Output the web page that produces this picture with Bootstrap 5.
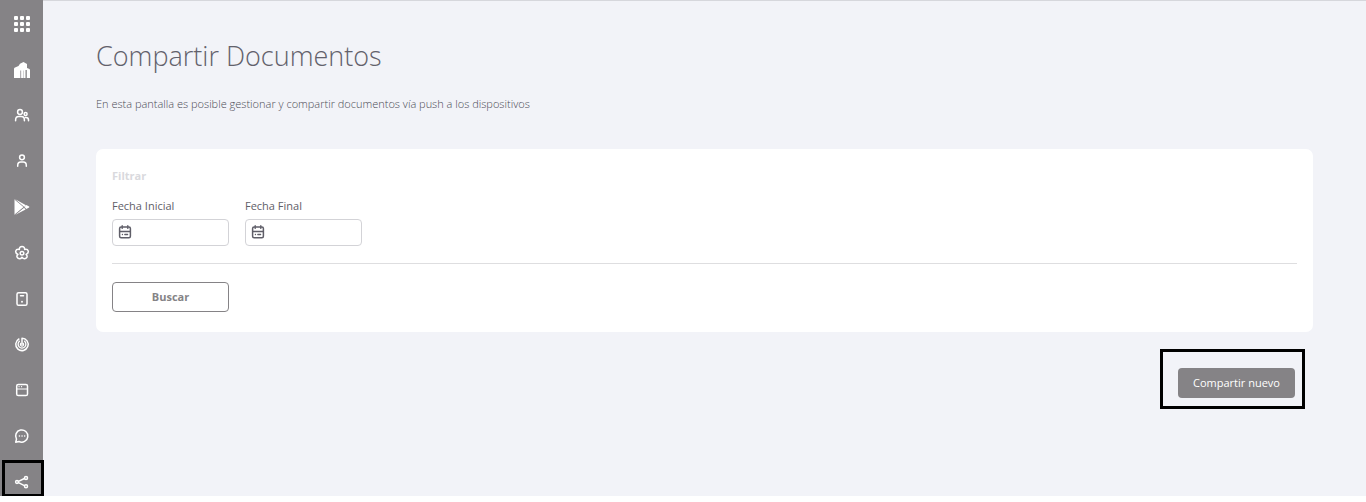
<!DOCTYPE html>
<html lang="es">
<head>
<meta charset="utf-8">
<meta name="viewport" content="width=device-width, initial-scale=1">
<title>Compartir Documentos</title>
<link href="https://cdn.jsdelivr.net/npm/bootstrap@5.3.0/dist/css/bootstrap.min.css" rel="stylesheet">
<style>
  body { font-family: "Open Sans", sans-serif; font-size: 11px; line-height: 16px; color: #5f5e68; background: #fff; }
  .app-shell { min-height: calc(100vh - 6px); background: #f2f3f8; }
  .side-bar { width: 43px; background: #858386; padding: 16px 0 6px; }
  .side-bar a { width: 16px; height: 16px; color: #fff; position: relative; }
  .side-bar svg, .date-box svg { display: block; width: 16px; height: 16px; fill: none; stroke: currentColor; stroke-width: 1.5; stroke-linecap: round; stroke-linejoin: round; }
  .side-bar .solid { fill: currentColor; stroke: none; }
  .marker::after { content: ""; position: absolute; border: 3px solid #000; pointer-events: none; }
  .side-bar .marker::after { inset: -14px -14px -7px -12px; }
  .new-doc.marker { position: relative; }
  .new-doc.marker::after { inset: -20px -11px -12px -19px; }
  .page-main { border-top: 1px solid #d6d7dc; padding: 34px 53px 0; }
  .page-title { font-size: 27px; line-height: 42px; font-weight: 300; color: #62616b; }
  .page-text { font-weight: 300; color: #4c4b55; margin: 19px 0 37px; }
  .filter-card { border: 0; border-radius: 7px; padding: 19px 16px 20px; }
  .filter-title { font-size: 11px; line-height: 16px; font-weight: 700; color: #d9d9dd; margin-bottom: 14px; }
  .field { width: 117px; }
  .field label { margin-bottom: 5px; }
  .date-box { height: 27px; border: 1px solid #d3d3d7; border-radius: 4px; padding: 0 4px 2px; color: #5f5e68; }
  .date-box input { font-size: 11px; background: transparent; outline: 0; }
  .filter-card hr { margin: 17px 0 18px; border-color: #dedee0; opacity: 1; }
  .app-btn { width: 117px; height: 30px; padding: 0; font-size: 11px; line-height: 16px; border-radius: 4px; }
  .btn-line { border: 1px solid #858386; color: #858386; font-weight: 700; }
  .btn-full, .btn-full:hover { background: #858386; color: #fff; }
  .actions { padding: 36px 18px 0; }
</style>
</head>
<body>
<div class="app-shell d-flex">
  <nav class="side-bar d-flex flex-column align-items-center justify-content-between flex-shrink-0" aria-label="Menú">
    <a href="#" aria-label="Aplicaciones"><svg class="solid" viewBox="0 0 16 16"><path d="M1 0h2q1 0 1 1v2q0 1-1 1H1q-1 0-1-1V1q0-1 1-1zM7 0h2q1 0 1 1v2q0 1-1 1H7q-1 0-1-1V1q0-1 1-1zM13 0h2q1 0 1 1v2q0 1-1 1h-2q-1 0-1-1V1q0-1 1-1zM1 6h2q1 0 1 1v2q0 1-1 1H1q-1 0-1-1V7q0-1 1-1zM7 6h2q1 0 1 1v2q0 1-1 1H7q-1 0-1-1V7q0-1 1-1zM13 6h2q1 0 1 1v2q0 1-1 1h-2q-1 0-1-1V7q0-1 1-1zM1 12h2q1 0 1 1v2q0 1-1 1H1q-1 0-1-1v-2q0-1 1-1zM7 12h2q1 0 1 1v2q0 1-1 1H7q-1 0-1-1v-2q0-1 1-1zM13 12h2q1 0 1 1v2q0 1-1 1h-2q-1 0-1-1v-2q0-1 1-1z"/></svg></a>
    <a href="#" aria-label="Inicio"><svg class="solid" viewBox="0 0 16 16"><path d="M0 16V7q0-1 1-1.400L4.500 4 6 1.800 9.500 0 13 2v4l2 .8q1 .4 1 1.400V16z"/><path d="M6 8.500h1.200V16H6z" fill="#b3b1b4"/><path d="M9 8.500h.8V16H9z" fill="#c9c8ca"/><path d="M11.500 8h1.300v8h-1.300z" fill="#858386"/></svg></a>
    <a href="#" aria-label="Usuarios"><svg viewBox="0 0 16 16"><circle cx="6" cy="4" r="2.400"/><path d="M1.600 12.800v-.6q0-3.600 3-3.600h2.800q3 0 3 3.600v.6"/><circle cx="11.600" cy="6" r="1.500"/><path d="M11.200 9.500h.8q2.500 0 2.500 2.500v.8"/></svg></a>
    <a href="#" aria-label="Usuario"><svg viewBox="0 0 16 16"><circle cx="8" cy="4.300" r="2.400"/><path d="M3.700 13.200v-.8q0-3.400 3-3.400h2.600q3 0 3 3.400v.8"/></svg></a>
    <a href="#" aria-label="Play Store"><svg class="solid" viewBox="0 0 16 16"><path d="M.8 0 12 6.200 10.200 8z"/><path d="M.5.300 9.600 8 .5 15.800z"/><path d="M1 16 10 8.800l1.600 1.600z"/><path d="M10.500 8 12.300 6l2.800 1.400q.6.600 0 1.200L12.300 10z"/><path d="m1.200.8 9 7.400-8.700 7" stroke="#858386" stroke-width=".5" fill="none"/></svg></a>
    <a href="#" aria-label="Configuración"><svg viewBox="0 0 16 16"><path d="M5.400 4.400Q5.300 1.500 8 1.500t2.600 2.900q3-.7 3.600 1.500t-2.100 3.500q2.100 2.200 0 3.700T8 12.200q-2 2.500-4.100.9t0-3.700Q1.200 8.100 1.800 5.900t3.600-1.500z"/><circle cx="8" cy="8.200" r="1.800"/></svg></a>
    <a href="#" aria-label="Dispositivos"><svg viewBox="0 0 16 16"><rect x="3" y="1.700" width="10" height="12.600" rx="1.600"/><path d="M6.500 4.800h3"/><path d="M8 10.600v.2" stroke-width="1.900"/></svg></a>
    <a href="#" aria-label="Localización"><svg viewBox="0 0 16 16"><path d="M8 7.500V1.200a6.200 6.200 0 1 1-3.100.8"/><path d="M10.600 4.300A3.900 3.900 0 1 1 5.400 4.300" stroke-width="1.300"/><path d="M9.100 6.300a1.600 1.600 0 1 1-2.200 0" stroke-width="1.200"/></svg></a>
    <a href="#" aria-label="Ventanas"><svg viewBox="0 0 16 16"><rect x="2.700" y="2.500" width="10.800" height="11" rx="1.600"/><path d="M2.700 7h10.800M5 4.700h.1M7.500 4.700h.1" stroke-width="1.200"/></svg></a>
    <a href="#" aria-label="Mensajes"><svg viewBox="0 0 16 16"><path d="M1.700 14.200l.8-3A6.100 6.100 0 1 1 5 13.500z"/><path d="M5.400 8h.1M8 8h.1M10.600 8h.1"/></svg></a>
    <a href="#" class="marker" aria-label="Compartir documentos" aria-current="page"><svg viewBox="0 0 16 16"><path d="m4.500 7.400 5.900-2.900M4.500 8.700l5.900 2.900"/><circle cx="3" cy="8" r="1.400"/><circle cx="12" cy="3.900" r="1.500"/><circle cx="12" cy="12.200" r="1.500"/></svg></a>
  </nav>
  <main class="page-main flex-grow-1">
    <h1 class="page-title mb-0">Compartir Documentos</h1>
    <p class="page-text">En esta pantalla es posible gestionar y compartir documentos vía push a los dispositivos</p>
    <form class="card filter-card">
      <h2 class="filter-title">Filtrar</h2>
      <div class="d-flex flex-wrap gap-3">
        <div class="field">
          <label class="d-block" for="fecha-inicial">Fecha Inicial</label>
          <div class="date-box d-flex align-items-center">
            <svg class="flex-shrink-0" viewBox="0 0 16 16"><rect x="2.600" y="3" width="10.800" height="10.700" rx="1.500"/><path d="M2.600 7.500h10.800M5.200 1.600v2.800M10.800 1.600v2.800M5.400 10.500h.1M7.800 10.500h2.800" stroke-width="1.300"/></svg>
            <input class="border-0 w-100" type="text" id="fecha-inicial">
          </div>
        </div>
        <div class="field">
          <label class="d-block" for="fecha-final">Fecha Final</label>
          <div class="date-box d-flex align-items-center">
            <svg class="flex-shrink-0" viewBox="0 0 16 16"><rect x="2.600" y="3" width="10.800" height="10.700" rx="1.500"/><path d="M2.600 7.500h10.800M5.200 1.600v2.800M10.800 1.600v2.800M5.400 10.500h.1M7.800 10.500h2.800" stroke-width="1.300"/></svg>
            <input class="border-0 w-100" type="text" id="fecha-final">
          </div>
        </div>
      </div>
      <hr>
      <button type="button" class="btn app-btn btn-line">Buscar</button>
    </form>
    <div class="actions d-flex justify-content-end">
      <button type="button" class="btn app-btn btn-full new-doc marker">Compartir nuevo</button>
    </div>
  </main>
</div>
<script src="https://cdn.jsdelivr.net/npm/bootstrap@5.3.0/dist/js/bootstrap.bundle.min.js"></script>
</body>
</html>
